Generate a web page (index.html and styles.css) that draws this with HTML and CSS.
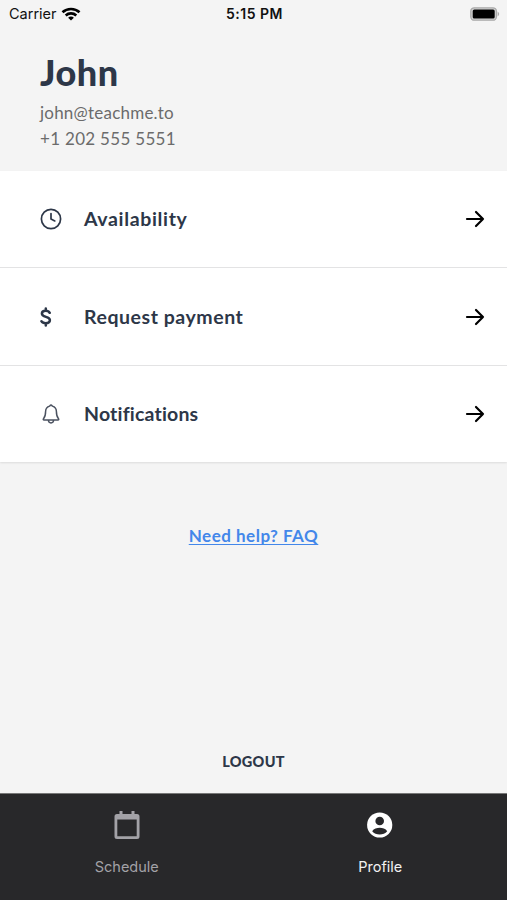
FILE: index.html
```html
<!DOCTYPE html>
<html lang="en">
<head>
<meta charset="utf-8">
<title>Profile</title>
<link rel="stylesheet" href="styles.css">
</head>
<body>
<div class="screen">
  <div class="status">
    <div class="carrier"><span>Carrier</span>
      <svg width="20" height="14" viewBox="0 0 20 14" fill="none" stroke="#000" stroke-width="2.6"><path d="M1.500 5.300C6.200.8 13.800.8 18.500 5.300"/><path d="M4.700 8.500c3-2.800 7.600-2.800 10.600 0"/><path d="M10 13.600 7.100 10.700C8.700 9.200 11.300 9.200 12.900 10.700Z" fill="#000" stroke="none"/></svg>
    </div>
    <div class="time">5:15 PM</div>
    <div class="battery">
      <svg width="30" height="14" viewBox="0 0 30 14"><rect x=".8" y=".8" width="25.600" height="12.400" rx="3.500" fill="#d4d4d4" stroke="#a9a9a9" stroke-width="1.300"/><rect x="2.700" y="2.500" width="22" height="9" rx="1.600"/><path d="M27.600 4.500q3.200 2.500 0 5z" fill="#a9a9a9"/></svg>
    </div>
  </div>
  <header class="profile">
    <h1>John</h1>
    <p class="email">john@teachme.to</p>
    <p class="phone">+1 202 555 5551</p>
  </header>
  <main class="menu">
    <a class="row">
      <span class="icon"><svg width="22" height="22" viewBox="0 0 22 22" fill="none" stroke="#2d3748" stroke-width="1.700" stroke-linecap="round" stroke-linejoin="round"><circle cx="11" cy="11" r="9.600"/><path d="M11 5.500V11l3.800 1.900"/></svg></span>
      <span class="label availability">Availability</span>
      <svg class="arrow" width="20" height="18" viewBox="0 0 20 18"><path d="M2 9h16M11 2l7 7-7 7"/></svg>
    </a>
    <a class="row">
      <span class="icon"><svg width="12" height="20" viewBox="0 0 12 20" fill="none" stroke="#2d3748" stroke-width="2.500" stroke-linecap="round"><path d="M9.700 5.800C8.900 4.300 7.500 3.700 5.600 3.700 3.500 3.700 1.900 4.700 1.900 6.600c0 4.300 8 2.300 8 6.500 0 2.100-1.700 3.200-4.200 3.200-1.900 0-3.400-.6-4.300-2.100M5.800 1.500v2M5.800 16.500v2"/></svg></span>
      <span class="label payment">Request payment</span>
      <svg class="arrow" width="20" height="18" viewBox="0 0 20 18"><path d="M2 9h16M11 2l7 7-7 7"/></svg>
    </a>
    <a class="row">
      <span class="icon bell"><svg width="18" height="20" viewBox="0 0 18 20" fill="none" stroke="#4b5260" stroke-width="1.500" stroke-linecap="round" stroke-linejoin="round"><path d="M9 1c-.8 0-1 .7-1.400 1.100C5 2.800 3.600 4.900 3.600 7.600c0 4.400-.8 5.800-2.100 7.200-.5.600-.2 1.100.5 1.100h14c.7 0 1-.5.500-1.100-1.300-1.400-2.100-2.800-2.100-7.200 0-2.700-1.400-4.800-4-5.500C10 1.700 9.800 1 9 1ZM6.300 16c.2 1.900 1.200 2.900 2.700 2.900s2.500-1 2.700-2.900"/></svg></span>
      <span class="label notifications">Notifications</span>
      <svg class="arrow" width="20" height="18" viewBox="0 0 20 18"><path d="M2 9h16M11 2l7 7-7 7"/></svg>
    </a>
  </main>
  <div class="actions">
    <a class="help">Need help? FAQ</a>
    <a class="logout">LOGOUT</a>
  </div>
  <nav class="tabs">
    <a class="tab">
      <svg width="26" height="30" viewBox="0 0 26 30" fill="#a3a2a7"><path fill-rule="evenodd" d="M5.500 1h3v3h9V1h3v3h2.500Q25.500 4 25.500 6.500v20Q25.500 29 23 29H3Q.5 29 .5 26.500v-20Q.5 4 3 4h2.500ZM3.300 9.500v16.700h19.400V9.500Z"/></svg>
      <span class="schedule">Schedule</span>
    </a>
    <a class="tab active">
      <svg width="26" height="30" viewBox="0 0 26 30"><circle cx="12.700" cy="15" r="12.600" fill="#fff"/><circle cx="12.700" cy="11" r="4.300" fill="#28282a"/><path d="M5.200 21.300C6.700 18.500 10 17.800 12.700 17.800s6 .7 7.500 3.500C18.400 23.500 15.700 24.500 12.700 24.500s-5.700-1-7.500-3.200Z" fill="#28282a"/></svg>
      <span class="profile-label">Profile</span>
    </a>
  </nav>
</div>
</body>
</html>
```
FILE: styles.css
```css
* { box-sizing: border-box; }
body { margin: 0; background: #f4f4f4; }
h1, p { margin: 0; }
svg { display: block; flex: none; }
.screen {
  width: 507px;
  height: 900px;
  display: flex;
  flex-direction: column;
  color: #2d3748;
  font-family: Lato, "Open Sans", sans-serif;
  white-space: nowrap;
}
.status {
  height: 28px;
  display: grid;
  grid-template-columns: 1fr auto 1fr;
  align-items: center;
  padding: 0 7px 1px 9px;
  font: 14.500px/20px Inter, sans-serif;
  color: #111;
}
.carrier { display: flex; align-items: center; gap: 4px; }
.time { font-weight: 600; font-size: 14px; letter-spacing: .5px; }
.battery { justify-self: end; }
.profile { height: 143px; padding: 21px 40px 0; }
.profile h1 { font-size: 36px; line-height: 46px; font-weight: 900; letter-spacing: .5px; margin-bottom: 5px; }
.profile p { font-size: 17px; line-height: 25.500px; color: #6b6b6b; }
.profile .email { letter-spacing: .22px; }
.profile .phone { letter-spacing: .3px; }
.menu { height: 291px; background: #fff; box-shadow: 0 1px 2px rgba(0, 0, 0, .1); }
.row { height: 96px; display: flex; align-items: center; padding: 0 22px 0 40px; }
.row + .row { height: 98px; border-top: 1px solid #e3e3e4; }
.row + .row + .row { height: 97px; }
.icon { width: 44px; }
.bell { padding-left: 2px; }
.label { flex: 1; font-size: 19.500px; font-weight: 700; line-height: 28px; }
.availability { letter-spacing: .65px; }
.payment { letter-spacing: .55px; }
.notifications { letter-spacing: .18px; }
.arrow { fill: none; stroke: #000; stroke-width: 2.200; stroke-linecap: round; stroke-linejoin: round; }
.actions {
  flex: 1;
  display: flex;
  flex-direction: column;
  align-items: center;
  justify-content: space-between;
  padding: 62px 0 21px;
}
.help {
  color: #4387ea;
  font-size: 17px;
  line-height: 24px;
  font-weight: 700;
  letter-spacing: .5px;
  text-decoration: underline;
  text-decoration-thickness: 1px;
  text-underline-offset: 2px;
  text-decoration-skip-ink: none;
}
.logout { font-size: 14.500px; line-height: 20px; font-weight: 900; letter-spacing: .3px; }
.tabs { height: 107px; display: flex; background: #28282a; border-top: 1px solid #777; }
.tab {
  flex: 1;
  display: flex;
  flex-direction: column;
  align-items: center;
  padding-top: 16px;
  gap: 17px;
  font: 14.500px/20px Inter, sans-serif;
  color: #a3a2a7;
}
.active { color: #f1f1f1; }
```
